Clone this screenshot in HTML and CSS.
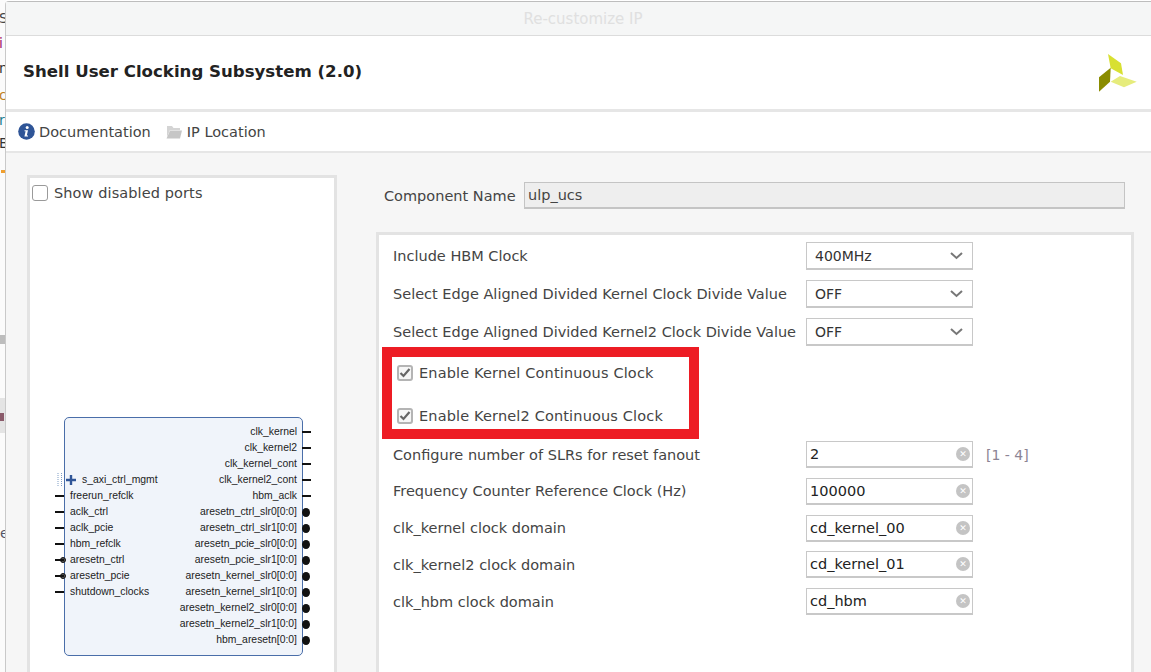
FILE: index.html
```html
<!DOCTYPE html>
<html lang="en">
<head>
    <meta charset="UTF-8">
    <title>Re-customize IP</title>
    <link rel="stylesheet" href="styles.css">
</head>
<body>

    <!-- Window behind the dialog, only a sliver is visible -->
    <div class="behind">
        <span class="frag frag-s">S</span>
        <span class="frag frag-i">i</span>
        <span class="frag frag-n">n</span>
        <span class="frag frag-o">c</span>
        <span class="frag frag-r">r</span>
        <span class="frag frag-b">B</span>
        <span class="frag frag-star"></span>
        <span class="frag frag-grey"></span>
        <span class="frag frag-band"></span>
        <span class="frag frag-mark"></span>
        <span class="frag frag-e">e</span>
    </div>

    <div class="dialog">
        <div class="title-bar">Re-customize IP</div>

        <div class="header">
            <h1>Shell User Clocking Subsystem (2.0)</h1>
            <svg class="logo" width="38" height="38" viewBox="0 0 38 38">
                <polygon points="9,0 22,9.3 24,21 11.7,14.3" fill="#d8e032"/>
                <polygon points="11.7,13.7 11,27.7 0,37.7 0,23.3" fill="#8a8c00"/>
                <polygon points="21,22 37.7,27.7 25,33.3 11.7,27.7" fill="#e6ec7c"/>
            </svg>
        </div>

        <div class="toolbar">
            <a class="tool">
                <svg width="17" height="17" viewBox="0 0 17 17">
                    <circle cx="8.5" cy="8.5" r="8.3" fill="#2f5597"/>
                    <circle cx="9.2" cy="4.4" r="1.5" fill="#fff"/>
                    <path d="M6.6 7.2h3.4l-1.2 5.2h1.2v1.1H6.4l1.2-5.2H6.4z" fill="#fff"/>
                </svg>
                Documentation
            </a>
            <a class="tool tool-folder">
                <svg width="16" height="14" viewBox="0 0 16 14">
                    <path d="M1 1h5l1.5 2H14v2H4L1 12z" fill="#d4d4d4"/>
                    <path d="M4 5.5h12L14 13.5H0.5z" fill="#c6c6c6"/>
                </svg>
                IP Location
            </a>
        </div>

        <div class="content">
            <div class="symbol-panel">
                <label class="check-line">
                    <span class="box"></span>
                    Show disabled ports
                </label>

                <div class="block">
                    <div class="ports ports-in">
                        <span class="port port-first">
                            <svg class="handle" width="6" height="13" viewBox="0 0 6 13">
                                <path d="M1 0v13M4.5 0v13" stroke="#7f9dc4" stroke-width="1" stroke-dasharray="1 1"/>
                            </svg>
                            <svg class="plus" width="10" height="10" viewBox="0 0 10 10">
                                <path d="M5 0v10M0 5h10" stroke="#2f5597" stroke-width="2.4"/>
                            </svg>
                            s_axi_ctrl_mgmt
                        </span>
                        <span class="port wire">freerun_refclk</span>
                        <span class="port wire">aclk_ctrl</span>
                        <span class="port wire">aclk_pcie</span>
                        <span class="port wire">hbm_refclk</span>
                        <span class="port wire neg">aresetn_ctrl</span>
                        <span class="port wire neg">aresetn_pcie</span>
                        <span class="port wire">shutdown_clocks</span>
                    </div>
                    <div class="ports ports-out">
                        <span class="port wire">clk_kernel</span>
                        <span class="port wire">clk_kernel2</span>
                        <span class="port wire">clk_kernel_cont</span>
                        <span class="port wire">clk_kernel2_cont</span>
                        <span class="port wire">hbm_aclk</span>
                        <span class="port bus">aresetn_ctrl_slr0[0:0]</span>
                        <span class="port bus">aresetn_ctrl_slr1[0:0]</span>
                        <span class="port bus">aresetn_pcie_slr0[0:0]</span>
                        <span class="port bus">aresetn_pcie_slr1[0:0]</span>
                        <span class="port bus">aresetn_kernel_slr0[0:0]</span>
                        <span class="port bus">aresetn_kernel_slr1[0:0]</span>
                        <span class="port bus">aresetn_kernel2_slr0[0:0]</span>
                        <span class="port bus">aresetn_kernel2_slr1[0:0]</span>
                        <span class="port bus">hbm_aresetn[0:0]</span>
                    </div>
                </div>
            </div>

            <div class="settings">
                <div class="component-row">
                    <span class="component-label">Component Name</span>
                    <div class="component-input">ulp_ucs</div>
                </div>

                <div class="params">
                    <div class="param row-a">
                        <span>Include HBM Clock</span>
                        <div class="select">400MHz<svg width="13" height="8" viewBox="0 0 13 8"><path d="M1 1l5.5 5L12 1" fill="none" stroke="#777" stroke-width="2"/></svg></div>
                    </div>
                    <div class="param row-a">
                        <span>Select Edge Aligned Divided Kernel Clock Divide Value</span>
                        <div class="select">OFF<svg width="13" height="8" viewBox="0 0 13 8"><path d="M1 1l5.5 5L12 1" fill="none" stroke="#777" stroke-width="2"/></svg></div>
                    </div>
                    <div class="param row-a">
                        <span>Select Edge Aligned Divided Kernel2 Clock Divide Value</span>
                        <div class="select">OFF<svg width="13" height="8" viewBox="0 0 13 8"><path d="M1 1l5.5 5L12 1" fill="none" stroke="#777" stroke-width="2"/></svg></div>
                    </div>

                    <div class="checks">
                        <label class="check-line">
                            <span class="box checked"><svg width="12" height="10" viewBox="0 0 12 10"><path d="M1.5 5l3 3 6-7" fill="none" stroke="#666" stroke-width="2.2"/></svg></span>
                            Enable Kernel Continuous Clock
                        </label>
                        <label class="check-line">
                            <span class="box checked"><svg width="12" height="10" viewBox="0 0 12 10"><path d="M1.5 5l3 3 6-7" fill="none" stroke="#666" stroke-width="2.2"/></svg></span>
                            Enable Kernel2 Continuous Clock
                        </label>
                        <div class="highlight"></div>
                    </div>

                    <div class="param row-b">
                        <span>Configure number of SLRs for reset fanout</span>
                        <div class="text-input">2<i class="clear">&#10005;</i></div>
                        <span class="range">[1 - 4]</span>
                    </div>
                    <div class="param row-b">
                        <span>Frequency Counter Reference Clock (Hz)</span>
                        <div class="text-input">100000<i class="clear">&#10005;</i></div>
                    </div>
                    <div class="param row-b">
                        <span>clk_kernel clock domain</span>
                        <div class="text-input">cd_kernel_00<i class="clear">&#10005;</i></div>
                    </div>
                    <div class="param row-b">
                        <span>clk_kernel2 clock domain</span>
                        <div class="text-input">cd_kernel_01<i class="clear">&#10005;</i></div>
                    </div>
                    <div class="param row-b">
                        <span>clk_hbm clock domain</span>
                        <div class="text-input">cd_hbm<i class="clear">&#10005;</i></div>
                    </div>
                </div>
            </div>
        </div>
    </div>

</body>
</html>
```

FILE: styles.css
```css
/* General */
html, body {
    margin: 0;
    height: 672px;
    overflow: hidden;
}

body {
    position: relative;
    background-color: #fff;
    font-family: "DejaVu Sans", sans-serif;
    font-size: 14.5px;
    color: #444;
}

/* Window behind */
.behind {
    position: absolute;
    left: 0;
    top: 0;
    width: 6px;
    height: 672px;
    overflow: hidden;
    background-color: #fbfbfb;
}

.frag {
    position: absolute;
    left: -1px;
    font-size: 14px;
    line-height: 14px;
}

.frag-s { top: 11px; color: #444; }
.frag-i { top: 36px; color: #a0206a; }
.frag-n { top: 61px; color: #333; }
.frag-o { top: 88px; color: #c08020; }
.frag-r { top: 113px; color: #208090; }
.frag-b { top: 136px; color: #333; }

.frag-star {
    top: 170px;
    left: 1px;
    width: 4px;
    height: 3px;
    background-color: #f0a030;
}

.frag-grey {
    top: 335px;
    left: 0;
    width: 6px;
    height: 9px;
    background-color: #bdbdbd;
}

.frag-band {
    top: 398px;
    left: 0;
    width: 6px;
    height: 35px;
    background-color: #e4e4e4;
}

.frag-mark {
    top: 413px;
    left: 0;
    width: 4px;
    height: 8px;
    background-color: #8a5a6a;
}

.frag-e {
    top: 526px;
    color: #556;
    left: 0;
}

/* Dialog */
.dialog {
    position: absolute;
    left: 5px;
    top: 1px;
    width: 1146px;
    height: 671px;
    box-sizing: border-box;
    border-left: 1px solid #c9c9c9;
    border-top: 1px solid #bdbdbd;
    border-top-left-radius: 4px;
    background-color: #f6f6f6;
    display: flex;
    flex-direction: column;
}

.title-bar {
    height: 33px;
    line-height: 35px;
    padding-left: 9px;
    background-color: #f5f6f6;
    border-bottom: 1px solid #dcdcdc;
    text-align: center;
    font-size: 15px;
    color: #e0e0e0;
    flex: none;
}

.header {
    height: 73px;
    box-sizing: content-box;
    flex: none;
    background-color: #fff;
    border-bottom: 3px solid #e6e6e6;
    position: relative;
    display: flex;
    align-items: center;
    padding-left: 17px;
}

.header h1 {
    margin: 0 0 2px;
    font-size: 16.6px;
    font-weight: bold;
    color: #222;
}

.logo {
    position: absolute;
    left: 1093px;
    top: 18px;
}

.toolbar {
    height: 39px;
    flex: none;
    background-color: #fff;
    border-bottom: 2px solid #e6e6e6;
    display: flex;
    align-items: center;
    padding-left: 12px;
    gap: 15px;
}

.tool {
    display: flex;
    align-items: center;
    gap: 4px;
}

.tool-folder {
    gap: 5px;
}

.content {
    flex: 1;
    display: flex;
    padding: 22px 0 0 21px;
    min-height: 0;
}

/* Left symbol panel */
.symbol-panel {
    width: 304px;
    flex: none;
    background-color: #fff;
    border: 3px solid #e3e3e3;
    border-bottom: none;
    position: relative;
}

.check-line {
    display: flex;
    align-items: center;
    gap: 6px;
    letter-spacing: 0.1px;
}

.symbol-panel .check-line {
    margin: 7px 0 0 2px;
}

.box {
    width: 16px;
    height: 16px;
    box-sizing: border-box;
    border: 1px solid #9a9a9a;
    border-radius: 3px;
    background-color: #fff;
    display: flex;
    align-items: center;
    justify-content: center;
    flex: none;
}

.box.checked {
    border: 2px solid #b4b4b4;
    background-color: #f6f6f6;
}

.box.checked svg {
    flex: none;
}

/* IP symbol, placed freely on the panel */
.block {
    position: absolute;
    left: 34px;
    top: 239px;
    width: 237px;
    height: 237px;
    background-color: #f0f4fa;
    border: 1px solid #4a6ea9;
    border-radius: 5px;
    display: flex;
    justify-content: space-between;
}

.ports {
    display: flex;
    flex-direction: column;
    padding: 6px 5px 0;
}

.ports-in {
    padding-top: 54px;
    align-items: flex-start;
}

.ports-out {
    align-items: flex-end;
}

.port {
    position: relative;
    height: 16px;
    font-family: "Liberation Sans", sans-serif;
    font-size: 10.4px;
    line-height: 16px;
    color: #222;
    white-space: nowrap;
}

.port-first {
    margin-left: 12px;
}

.handle {
    position: absolute;
    left: -25px;
    top: 1px;
}

.plus {
    position: absolute;
    left: -16px;
    top: 3px;
}

.port.wire::after {
    content: "";
    position: absolute;
    top: 7px;
    width: 9px;
    height: 2px;
    background-color: #111;
}

.ports-in .port.wire::after {
    left: -15px;
}

.ports-out .port.wire::after {
    right: -14px;
}

.port.neg::before {
    content: "";
    position: absolute;
    left: -10px;
    top: 5px;
    width: 4px;
    height: 4px;
    border: 1px solid #111;
    border-radius: 50%;
    background-color: #555;
}

.port.bus::after {
    content: "";
    position: absolute;
    right: -13px;
    top: 4px;
    width: 8px;
    height: 9px;
    border-radius: 50%;
    background-color: #111;
}

/* Right side */
.settings {
    flex: none;
    width: 758px;
    margin-left: 39px;
    display: flex;
    flex-direction: column;
}

.component-row {
    display: flex;
    align-items: center;
    height: 27px;
    margin: 7px 0 0 8px;
}

.component-label {
    width: 140px;
    flex: none;
}

.component-input {
    width: 601px;
    box-sizing: border-box;
    height: 27px;
    line-height: 24px;
    padding-left: 3px;
    background-color: #eee;
    border: 1px solid #c4c4c4;
    border-bottom-width: 2px;
}

.params {
    flex: 1;
    margin-top: 23px;
    background-color: #fff;
    border: 3px solid #e3e3e3;
    border-bottom: none;
    padding: 7px 14px 0;
    position: relative;
}

.param {
    display: grid;
    grid-template-columns: 413px 167px auto;
    align-items: center;
}

.row-a {
    height: 28px;
    margin-bottom: 10px;
}

.row-b {
    height: 27px;
    margin-bottom: 9.75px;
}

.select, .text-input {
    box-sizing: border-box;
    background-color: #fff;
    border: 1px solid #c8c8c8;
    border-bottom-width: 2px;
    display: flex;
    align-items: center;
    justify-content: space-between;
    color: #333;
}

.select {
    height: 28px;
    font-size: 14px;
    padding: 0 9px 0 8px;
}

.text-input {
    height: 27px;
    padding: 0 2px 0 3px;
    color: #222;
}

.clear {
    width: 14px;
    height: 14px;
    border-radius: 50%;
    background-color: #c4c4c4;
    color: #fff;
    font-style: normal;
    font-size: 9px;
    line-height: 14px;
    text-align: center;
    font-weight: bold;
}

.range {
    margin-left: 13px;
    font-size: 14px;
    color: #8c8494;
}

.checks {
    position: relative;
    box-sizing: border-box;
    height: 94px;
    margin-top: -9px;
    padding-top: 4px;
}

.checks .check-line {
    height: 43px;
    margin-left: 4px;
    letter-spacing: 0.15px;
}

.highlight {
    position: absolute;
    left: -11px;
    top: 0;
    width: 297px;
    height: 72px;
    border: 10px solid #ed1c24;
}
```
